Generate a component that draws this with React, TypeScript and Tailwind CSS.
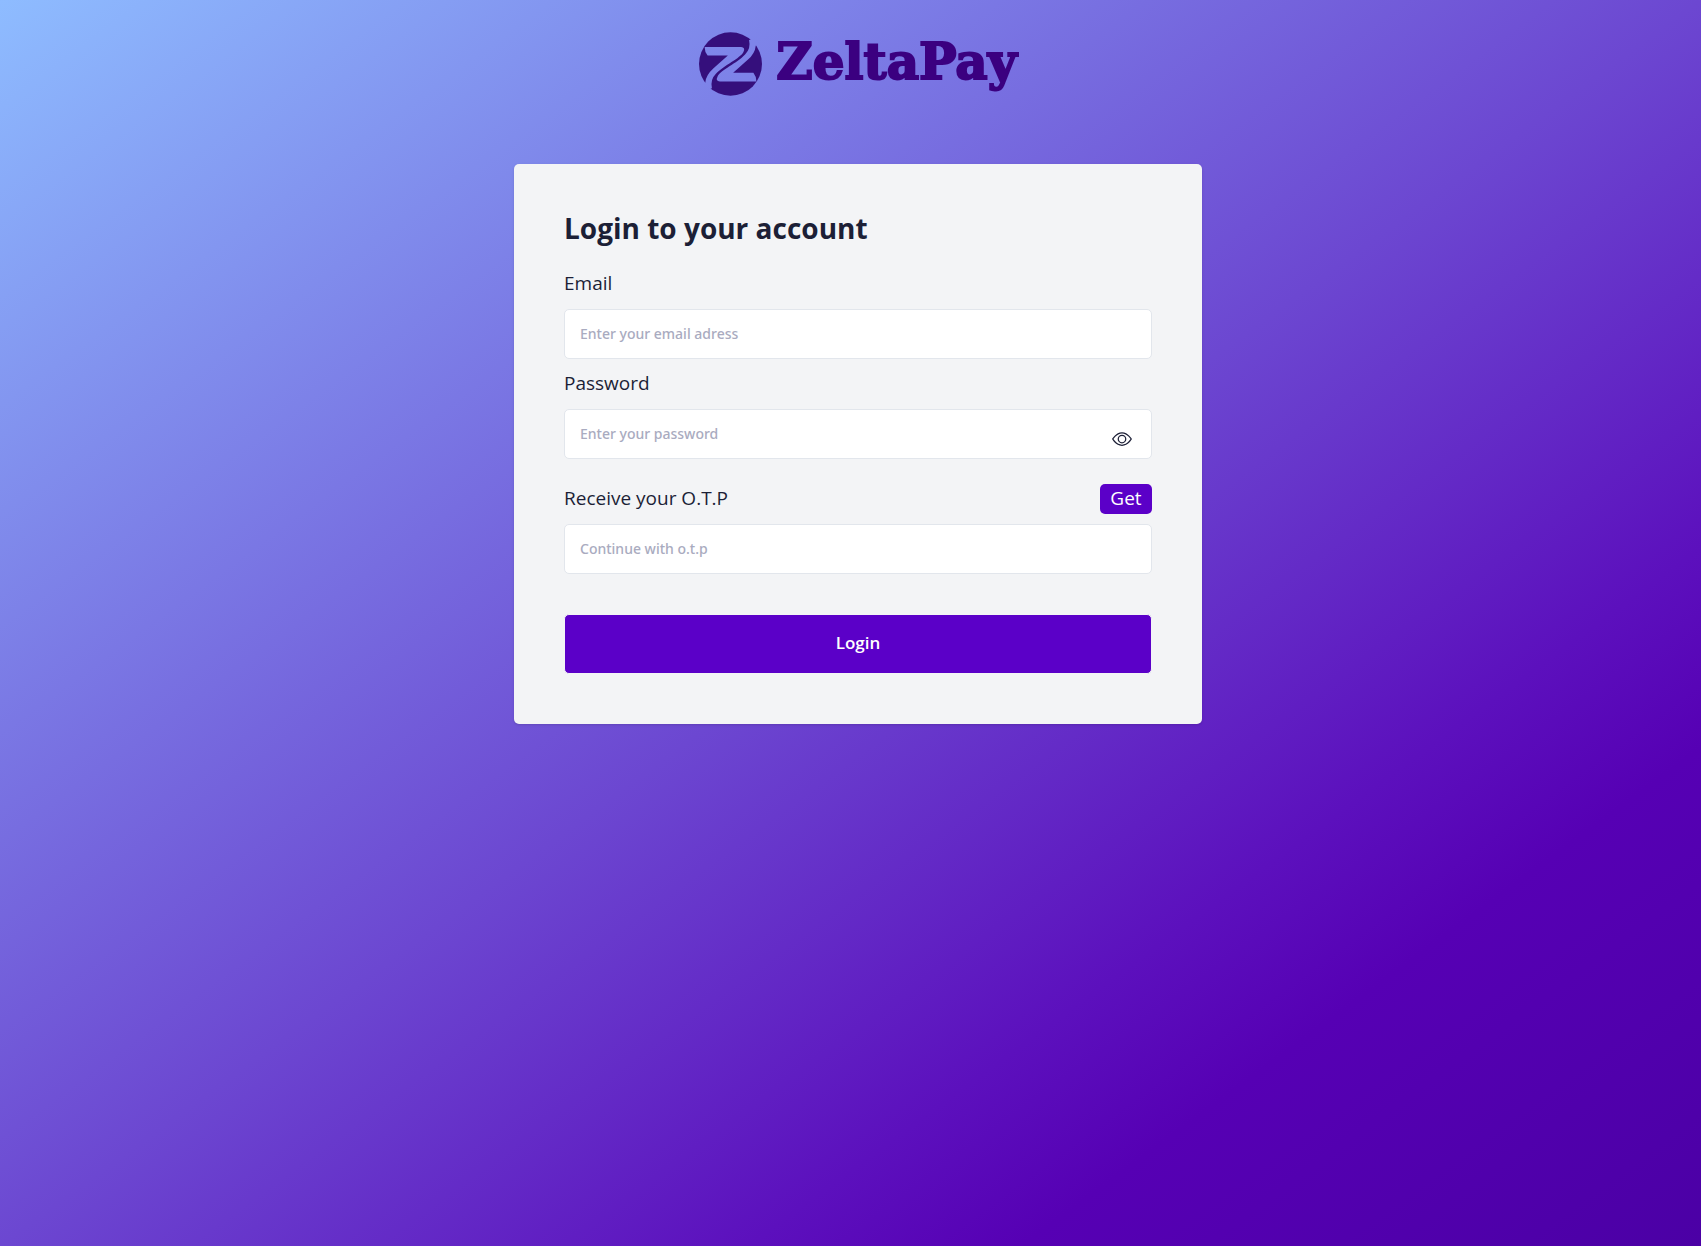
import { useState } from 'react';
import type { FormEvent } from 'react';
import { BsEye, BsEyeSlash } from 'react-icons/bs';

const inputClass =
  "block w-full h-[50px] pl-[15px] pr-4 pb-[2px] bg-white border border-[#e2e6ec] rounded-[5px] font-['Noto_Sans',sans-serif] text-[14px] font-medium text-[#1c1f36] placeholder:text-[#a9abc0] outline-none focus:border-[#5b00c8]";

const labelClass = 'block text-[19px] leading-[28px] text-[#1c1f36]';

function LogoMark() {
  return (
    <svg viewBox="21 21 190 191" className="w-[63px] h-[64px] shrink-0" aria-hidden="true">
      <defs>
        <mask id="logo-cut" maskUnits="userSpaceOnUse" x="0" y="0" width="240" height="240">
          <ellipse cx="116" cy="116.5" rx="95" ry="95.5" fill="#fff" />
          <g id="logo-stroke" fill="#000">
            <path d="M38 65H148Q162 66 155 80C146 99 96 120 72 146Q54 164 60 190L30 200L40 172Q42 150 64 130L108 91H47Q38 80 38 65Z" />
          </g>
          <use href="#logo-stroke" transform="rotate(180 116 117)" />
        </mask>
      </defs>
      <rect x="0" y="0" width="240" height="240" fill="#350f7c" mask="url(#logo-cut)" />
    </svg>
  );
}

function Logo() {
  return (
    <a href="/" className="flex items-center gap-[14px]">
      <LogoMark />
      <span className="pb-1 font-['DejaVu_Serif',serif] font-bold text-[50px] leading-[56px] text-[#3b0080] [-webkit-text-stroke:2px_#3b0080]">
        ZeltaPay
      </span>
    </a>
  );
}

export default function App() {
  const [showPassword, setShowPassword] = useState(false);
  const EyeIcon = showPassword ? BsEyeSlash : BsEye;

  const handleSubmit = (e: FormEvent) => {
    e.preventDefault();
  };

  return (
    <div className="min-h-screen pl-[15px] flex flex-col items-center font-['Open_Sans',sans-serif] bg-[linear-gradient(to_bottom_right,#8ebcff_0%,#6c47d1_50%,#5c10bd_72%,#5600b4_80%,#4b00a5_100%)]">
      {/* Logo */}
      <header className="pt-8 pb-[68px]">
        <Logo />
      </header>

      {/* Login card */}
      <main className="w-full max-w-[688px] p-[50px] bg-[#f3f4f6] rounded-[5px] shadow-sm">
        <form onSubmit={handleSubmit}>
          <h1 className="text-[28px] leading-[28px] font-bold text-[#1c1f36]">Login to your account</h1>

          <div className="mt-[27px]">
            <label htmlFor="email" className={labelClass}>Email</label>
            <input id="email" type="email" placeholder="Enter your email adress" className={`${inputClass} mt-3`} />
          </div>

          <div className="mt-[10px]">
            <label htmlFor="password" className={labelClass}>Password</label>
            <div className="relative mt-3">
              <input
                id="password"
                type={showPassword ? 'text' : 'password'}
                placeholder="Enter your password"
                className={inputClass}
              />
              <button
                type="button"
                onClick={() => setShowPassword(!showPassword)}
                className="absolute right-5 top-5 text-[#1c1f36]"
                aria-label="Toggle password visibility"
              >
                <EyeIcon className="w-5 h-5" />
              </button>
            </div>
          </div>

          <div className="mt-[25px]">
            <div className="flex items-start justify-between">
              <label htmlFor="otp" className={labelClass}>Receive your O.T.P</label>
              <button type="button" className="w-[52px] h-[30px] pb-[2px] rounded-[5px] bg-[#5b00c8] text-[19px] leading-[28px] text-white">
                Get
              </button>
            </div>
            <input id="otp" type="text" placeholder="Continue with o.t.p" className={`${inputClass} mt-[10px]`} />
          </div>

          <button
            type="submit"
            className="block w-full h-[60px] mt-10 pb-[2px] rounded-[5px] border border-[#f3f4f6] bg-[#5b00c8] text-[17px] font-semibold text-white"
          >
            Login
          </button>
        </form>
      </main>
    </div>
  );
}
